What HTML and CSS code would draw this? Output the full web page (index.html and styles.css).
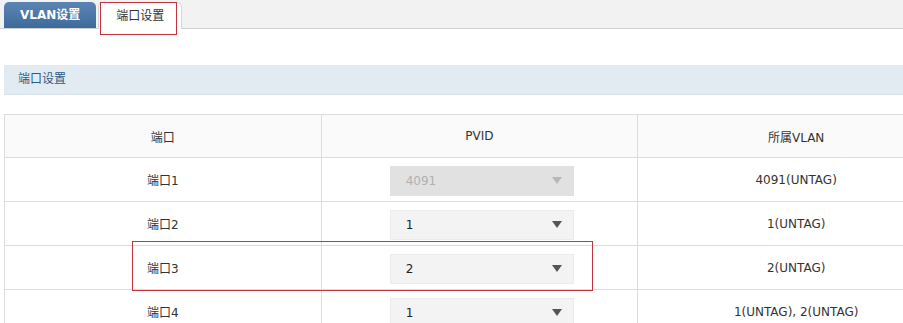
FILE: index.html
```html
<!DOCTYPE html>
<html lang="zh-CN">
<head>
  <meta charset="UTF-8" />
  <title>端口设置</title>
  <link rel="stylesheet" href="styles.css">
</head>
<body>

  <div class="tabs">
    <span class="tab">VLAN设置</span>
    <span class="tab active">端口设置</span>
  </div>

  <div class="panel">
    <div class="panel-title">端口设置</div>

    <table class="grid">
      <tr class="head"><th>端口</th><th>PVID</th><th>所属VLAN</th></tr>
      <tr>
        <td>端口1</td>
        <td><div class="select disabled"><span>4091</span><i class="arrow"></i></div></td>
        <td>4091(UNTAG)</td>
      </tr>
      <tr>
        <td>端口2</td>
        <td><div class="select"><span>1</span><i class="arrow"></i></div></td>
        <td>1(UNTAG)</td>
      </tr>
      <tr>
        <td>端口3</td>
        <td><div class="select"><span>2</span><i class="arrow"></i></div></td>
        <td>2(UNTAG)</td>
      </tr>
      <tr>
        <td>端口4</td>
        <td><div class="select"><span>1</span><i class="arrow"></i></div></td>
        <td>1(UNTAG), 2(UNTAG)</td>
      </tr>
    </table>
  </div>

  <!-- red annotation boxes -->
  <div class="mark mark-tab"></div>
  <div class="mark mark-row"></div>

</body>
</html>
```

FILE: styles.css
```css
html, body {
  margin: 0;
  padding: 0;
  background: #fff;
  overflow: hidden;
}
body {
  position: relative;
  width: 960px;
  font-family: "DejaVu Sans", "Noto Sans CJK SC", sans-serif;
  font-size: 12px;
  color: #333;
}

.tabs {
  display: flex;
  align-items: flex-end;
  gap: 2px;
  height: 26px;
  padding: 2px 0 0 4px;
  background: #f2f2f2;
  border-bottom: 1px solid #cfcfcf;
}
.tab {
  box-sizing: border-box;
  height: 26px;
  line-height: 26px;
  padding: 0 16px;
  border-radius: 5px 5px 0 0;
  background: linear-gradient(#5a85b3, #3f6b9b);
  color: #fff;
  font-weight: bold;
}
.tab.active {
  height: 27px;
  margin-bottom: -1px;
  padding: 0 17px;
  background: #fff;
  color: #333;
  font-weight: normal;
  border: 1px solid #d6d6d6;
  border-bottom: none;
}

.panel {
  margin: 36px 0 0 4px;
}
.panel-title {
  height: 29px;
  line-height: 29px;
  padding-left: 14px;
  background: #e2ebf1;
  border-bottom: 1px solid #d8e2ea;
  color: #2b5a84;
}

.grid {
  margin-top: 19px;
  width: 951px;
  border-collapse: collapse;
  table-layout: fixed;
}
.grid th, .grid td {
  border: 1px solid #dcdcdc;
  text-align: center;
  font-weight: normal;
  padding: 0;
  height: 43px;
}
.grid .head th {
  height: 42px;
  background: #fafafa;
}

.select {
  box-sizing: border-box;
  display: flex;
  align-items: center;
  justify-content: space-between;
  width: 184px;
  height: 30px;
  margin: 2px auto 0 68px;
  padding: 0 11px 0 15px;
  background: #f3f3f3;
  border: 1px solid #ececec;
  color: #222;
  text-align: left;
}
.select.disabled {
  background: #e1e1e1;
  border-color: #e1e1e1;
  color: #b0b0b0;
}
.arrow {
  width: 0;
  height: 0;
  border-left: 5px solid transparent;
  border-right: 5px solid transparent;
  border-top: 7px solid #555;
}
.select.disabled .arrow {
  border-top-color: #b8b8b8;
}

.mark {
  position: absolute;
  box-sizing: border-box;
  border: 1px solid #c4323b;
}
.mark-tab {
  left: 100px;
  top: 2px;
  width: 77px;
  height: 33px;
}
.mark-row {
  left: 132px;
  top: 241px;
  width: 461px;
  height: 50px;
}
```
